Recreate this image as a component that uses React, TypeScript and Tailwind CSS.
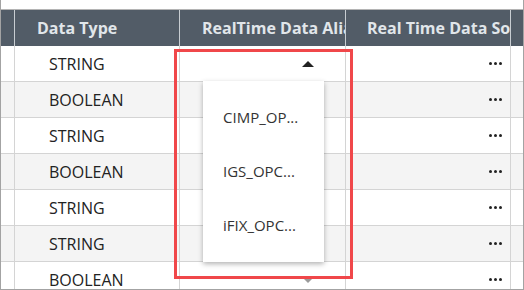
import React from "react";

const rows = ["STRING", "BOOLEAN", "STRING", "BOOLEAN", "STRING", "STRING", "BOOLEAN"];
const aliases = ["CIMP_OP...", "IGS_OPC...", "iFIX_OPC..."];

function Dots() {
  return (
    <div className="flex gap-[2px]">
      <span className="w-[3px] h-[3px] rounded-full bg-[#222]" />
      <span className="w-[3px] h-[3px] rounded-full bg-[#222]" />
      <span className="w-[3px] h-[3px] rounded-full bg-[#222]" />
    </div>
  );
}

function Caret({ up, color }: { up?: boolean; color: string }) {
  return (
    <svg width="12" height="6" viewBox="0 0 12 6">
      <polygon points={up ? "0,6 12,6 6,0" : "0,0 12,0 6,6"} fill={color} />
    </svg>
  );
}

const cols = "grid grid-cols-[14px_165px_166px_165px_12px]";

export default function App() {
  return (
    <div
      className="relative w-[524px] h-[290px] overflow-hidden bg-white border-x border-b border-[#a3a3a3]"
      style={{ fontFamily: "'Open Sans', sans-serif" }}
    >
      <div className="h-[9px]" />
      <div className="border-t border-[#b4b4b4]">
        <div className={`${cols} h-[36px] bg-[#525c67] text-[#e1e6ea] font-bold text-[16px]`}>
          <div className="border-r border-[#c8cdd2]" />
          <div className="border-r border-[#c8cdd2] flex items-center pl-[22px] overflow-hidden whitespace-nowrap">
            Data Type
          </div>
          <div className="border-r border-[#c8cdd2] flex items-center pl-[22px] overflow-hidden whitespace-nowrap">
            RealTime Data Alias
          </div>
          <div className="border-r border-[#c8cdd2] flex items-center pl-[21px] overflow-hidden whitespace-nowrap">
            Real Time Data Source
          </div>
          <div />
        </div>
        {rows.map((t, i) => (
          <div
            key={i}
            className={`${cols} h-[36px] border-b border-[#d4d4d4] text-[16px] text-[#222] ${
              i % 2 === 1 ? "bg-[#f4f4f4]" : "bg-white"
            }`}
          >
            <div className="border-r border-[#d4d4d4]" />
            <div className="border-r border-[#d4d4d4] flex items-center pl-[34px]">{t}</div>
            <div className="border-r border-[#d4d4d4] flex items-center justify-end pr-[31px]">
              {i === 0 && <Caret up color="#222" />}
              {i === 6 && <Caret color="#9a9a9a" />}
            </div>
            <div className="border-r border-[#d4d4d4] flex items-center justify-end pr-[8px]">
              <Dots />
            </div>
            <div />
          </div>
        ))}
      </div>

      {/* dropdown menu */}
      <div className="absolute left-[202px] top-[81px] w-[121px] h-[181px] bg-white py-[9px] shadow-[0_2px_5px_rgba(0,0,0,0.3)]">
        {aliases.map((a) => (
          <div key={a} className="h-[54px] flex items-center pl-[20px] text-[15px] text-[#333]">
            {a}
          </div>
        ))}
      </div>

      {/* highlight */}
      <div className="absolute left-[173px] top-[49px] w-[179px] h-[230px] border-[3px] border-[#f0474a]" />
    </div>
  );
}
